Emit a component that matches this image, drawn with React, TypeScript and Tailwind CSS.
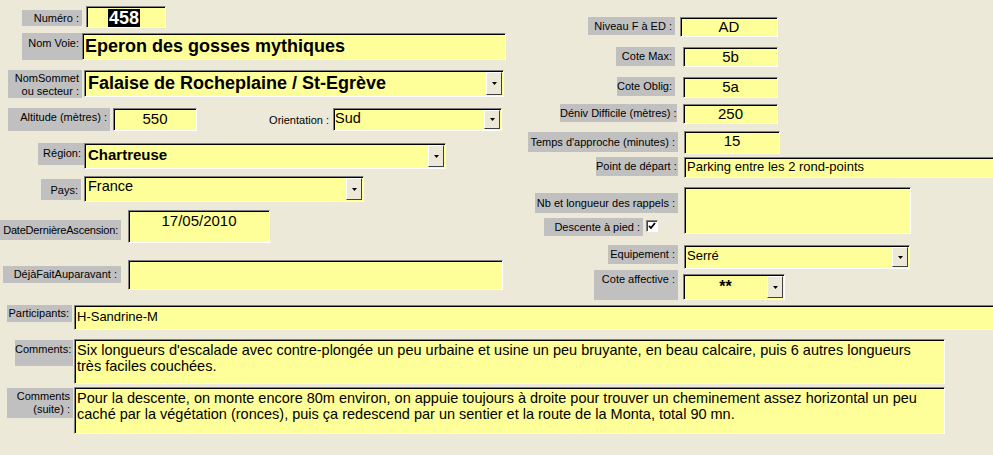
import type { ReactNode } from "react";

// Formulaire "fiche de voie" façon Access / Windows XP

function Label({
  children,
  className = "",
}: {
  children: ReactNode;
  className?: string;
}) {
  return (
    <div
      className={`flex-none overflow-hidden whitespace-nowrap bg-[#c0c0c0] pr-[3px] pt-[2px] text-right text-[11px] leading-[13px] text-black ${className}`}
    >
      {children}
    </div>
  );
}

function DropButton() {
  return (
    <div className="my-[1px] mr-[1px] flex w-[16px] flex-none items-center justify-center border border-b-[#404040] border-l-white border-r-[#404040] border-t-white bg-[#ece9d8]">
      <svg width="5" height="3" viewBox="0 0 5 3">
        <path d="M0 0h5L2.5 3z" fill="#000" />
      </svg>
    </div>
  );
}

function Field({
  children,
  className = "",
  dropdown = false,
}: {
  children?: ReactNode;
  className?: string;
  dropdown?: boolean;
}) {
  return (
    <div
      className={`flex flex-none border border-b-white border-l-[#808080] border-r-white border-t-[#808080] bg-[#ffff99] shadow-[inset_1px_1px_0_#000] ${className}`}
    >
      <div className="min-w-0 flex-1 overflow-hidden whitespace-nowrap">
        {children}
      </div>
      {dropdown && <DropButton />}
    </div>
  );
}

function RightRow({
  label,
  labelClass,
  children,
  className = "",
  width = "w-[155px]",
}: {
  label: ReactNode;
  labelClass: string;
  children: ReactNode;
  className?: string;
  width?: string;
}) {
  return (
    <div className={`flex items-start ${className}`}>
      <div className={`flex flex-none justify-end ${width}`}>
        <Label className={labelClass}>{label}</Label>
      </div>
      {children}
    </div>
  );
}

export default function App() {
  return (
    <div className="h-[455px] w-[993px] overflow-hidden bg-[#ece9d8] font-['Liberation_Sans',Arial,sans-serif] text-black">
      {/* Partie haute : deux colonnes */}
      <div className="flex h-[305px]">
        {/* Colonne gauche */}
        <div className="flex w-[520px] flex-none flex-col">
          {/* Numéro */}
          <div className="mt-[6px] flex items-start">
            <Label className="ml-[22px] mt-[4px] h-[16px] w-[60px] pt-[1px]">
              Numéro :
            </Label>
            <Field className="ml-[4px] h-[22px] w-[80px]">
              <span className="ml-[21px] mt-[1px] inline-block bg-black px-[1px] text-[18px] font-bold leading-[19px] text-white">
                458
              </span>
            </Field>
          </div>

          {/* Nom voie */}
          <div className="mt-[5px] flex items-start">
            <Label className="ml-[22px] h-[27px] w-[60px] pt-[4px]">
              Nom Voie:
            </Label>
            <Field className="h-[27px] w-[424px]">
              <div className="pl-[2px] pt-[2px] text-[18px] font-bold leading-[21px]">
                Eperon des gosses mythiques
              </div>
            </Field>
          </div>

          {/* Nom sommet */}
          <div className="mt-[10px] flex items-start">
            <Label className="ml-[8px] h-[28px] w-[74px] pt-[1px] leading-[12px]">
              NomSommet
              <br />
              ou secteur :
            </Label>
            <Field className="ml-[2px] h-[27px] w-[420px]" dropdown>
              <div className="pl-[3px] pt-[2px] text-[18px] font-bold leading-[21px]">
                Falaise de Rocheplaine / St-Egrève
              </div>
            </Field>
          </div>

          {/* Altitude + orientation */}
          <div className="mt-[10px] flex items-start">
            <Label className="ml-[8px] h-[23px] w-[102px] pt-[3px]">
              Altitude (mètres) :
            </Label>
            <Field className="ml-[3px] h-[23px] w-[84px]">
              <div className="pt-[1px] text-center text-[15px] leading-[18px]">
                550
              </div>
            </Field>
            <div className="mt-[6px] w-[136px] flex-none pr-[4px] text-right text-[11px] leading-[13px]">
              Orientation :
            </div>
            <Field className="h-[23px] w-[169px]" dropdown>
              <div className="pl-[1px] pt-[1px] text-[14.5px] leading-[17px]">
                Sud
              </div>
            </Field>
          </div>

          {/* Région */}
          <div className="mt-[12px] flex items-start">
            <Label className="ml-[38px] h-[22px] w-[46px] pt-[4px]">
              Région:
            </Label>
            <Field className="h-[26px] w-[362px]" dropdown>
              <div className="pl-[3px] pt-[2px] text-[15px] font-bold leading-[18px]">
                Chartreuse
              </div>
            </Field>
          </div>

          {/* Pays */}
          <div className="mt-[7px] flex items-start">
            <Label className="ml-[41px] mt-[3px] h-[21px] w-[40px] pt-[5px]">
              Pays:
            </Label>
            <Field className="ml-[3px] h-[26px] w-[280px]" dropdown>
              <div className="pl-[3px] pt-[1px] text-[14.5px] leading-[17px]">
                France
              </div>
            </Field>
          </div>

          {/* Date dernière ascension */}
          <div className="mt-[8px] flex items-start">
            <Label className="mt-[10px] h-[20px] w-[121px] pr-[1px] pt-[4px] tracking-[-0.2px]">
              DateDernièreAscension:
            </Label>
            <Field className="ml-[7px] h-[33px] w-[142px]">
              <div className="pt-[1px] text-center text-[15px] leading-[18px]">
                17/05/2010
              </div>
            </Field>
          </div>

          {/* Déjà fait */}
          <div className="mt-[17px] flex items-start">
            <Label className="ml-[3px] mt-[6px] h-[17px] w-[118px] pr-[4px] pt-[2px]">
              DéjàFaitAuparavant :
            </Label>
            <Field className="ml-[7px] h-[30px] w-[375px]" />
          </div>
        </div>

        {/* Colonne droite */}
        <div className="flex min-w-0 flex-1 flex-col">
          <RightRow
            className="mt-[17px]"
            label="Niveau F à ED :"
            labelClass="h-[18px] w-[87px] pt-[3px]"
          >
            <Field className="ml-[5px] h-[20px] w-[98px]">
              <div className="text-center text-[15px] leading-[18px]">AD</div>
            </Field>
          </RightRow>

          <RightRow
            className="mt-[10px]"
            label="Cote Max:"
            labelClass="h-[19px] w-[59px] pt-[3px]"
          >
            <Field className="ml-[8px] h-[20px] w-[95px]">
              <div className="text-center text-[15px] leading-[18px]">5b</div>
            </Field>
          </RightRow>

          <RightRow
            className="mt-[10px]"
            label="Cote Oblig:"
            labelClass="h-[19px] w-[58px] pt-[3px]"
          >
            <Field className="ml-[8px] h-[21px] w-[95px]">
              <div className="text-center text-[15px] leading-[18px]">5a</div>
            </Field>
          </RightRow>

          <RightRow
            className="mt-[6px]"
            width="w-[157px]"
            label="Déniv Difficile (mètres) :"
            labelClass="h-[18px] w-[117px] pt-[3px]"
          >
            <Field className="ml-[6px] h-[20px] w-[95px]">
              <div className="text-center text-[15px] leading-[18px]">250</div>
            </Field>
          </RightRow>

          <RightRow
            className="mt-[7px]"
            width="w-[158px]"
            label="Temps d'approche (minutes) :"
            labelClass="mt-[1px] h-[20px] w-[150px] pt-[4px]"
          >
            <Field className="ml-[6px] h-[23px] w-[96px]">
              <div className="text-center text-[15px] leading-[18px]">15</div>
            </Field>
          </RightRow>

          <RightRow
            className="mt-[3px]"
            width="w-[158px]"
            label="Point de départ :"
            labelClass="h-[19px] w-[82px] pt-[3px]"
          >
            <Field className="ml-[6px] h-[21px] w-[320px]">
              <div className="pl-[2px] pt-[1px] text-[13px] leading-[16px]">
                Parking entre les 2 rond-points
              </div>
            </Field>
          </RightRow>

          {/* Rappels + descente à pied */}
          <div className="mt-[9px] flex items-start">
            <div className="flex w-[158px] flex-none flex-col items-end">
              <Label className="mt-[6px] h-[20px] w-[143px] pt-[4px]">
                Nb et longueur des rappels :
              </Label>
              <div className="mt-[5px] flex items-start self-start">
                <Label className="ml-[24px] h-[18px] w-[99px] pt-[3px]">
                  Descente à pied :
                </Label>
                <div className="ml-[3px] mt-[2px] flex h-[12px] w-[12px] items-center justify-center border border-b-white border-l-[#808080] border-r-white border-t-[#808080] bg-white shadow-[inset_1px_1px_0_#404040]">
                  <svg width="8" height="8" viewBox="0 0 8 8">
                    <path
                      d="M1 4l2 2 4-5"
                      fill="none"
                      stroke="#000"
                      strokeWidth="1.8"
                    />
                  </svg>
                </div>
              </div>
            </div>
            <Field className="ml-[6px] h-[47px] w-[227px]" />
          </div>

          <RightRow
            className="mt-[9px]"
            width="w-[158px]"
            label="Equipement :"
            labelClass="h-[19px] w-[70px] pt-[3px]"
          >
            <Field className="ml-[6px] h-[24px] w-[226px]" dropdown>
              <div className="pl-[2px] pt-[2px] text-[13px] leading-[16px]">
                Serré
              </div>
            </Field>
          </RightRow>

          <RightRow
            className="mt-[1px]"
            width="w-[158px]"
            label="Cote affective :"
            labelClass="h-[30px] w-[84px] pt-[3px]"
          >
            <Field className="ml-[5px] mt-[4px] h-[26px] w-[102px]" dropdown>
              <div className="pt-[3px] text-center text-[16px] font-bold leading-[18px]">
                **
              </div>
            </Field>
          </RightRow>
        </div>
      </div>

      {/* Participants */}
      <div className="flex items-start">
        <Label className="ml-[7px] h-[17px] w-[65px] pr-[2px]">
          Participants:
        </Label>
        <Field className="ml-[2px] h-[25px] w-[930px]">
          <div className="pl-[2px] pt-[3px] text-[13px] leading-[16px]">
            H-Sandrine-M
          </div>
        </Field>
      </div>

      {/* Commentaires */}
      <div className="mt-[9px] flex items-start">
        <Label className="ml-[15px] mt-[1px] h-[26px] w-[58px] pr-[2px] pt-[3px] text-[10px]">
          Comments:
        </Label>
        <Field className="ml-[1px] h-[45px] w-[871px]">
          <div className="whitespace-nowrap pl-[2px] pt-[2px] text-[14.5px] leading-[16px]">
            Six longueurs d'escalade avec contre-plongée un peu urbaine et
            usine un peu bruyante, en beau calcaire, puis 6 autres longueurs
            <br />
            très faciles couchées.
          </div>
        </Field>
      </div>

      <div className="mt-[3px] flex items-start">
        <Label className="ml-[7px] mt-[1px] h-[30px] w-[66px] pr-[2px] pt-[1px] text-[10px] leading-[13px]">
          Comments
          <br />
          (suite) :
        </Label>
        <Field className="ml-[1px] h-[47px] w-[871px]">
          <div className="whitespace-nowrap pl-[2px] pt-[2px] text-[14.5px] leading-[16px]">
            Pour la descente, on monte encore 80m environ, on appuie toujours
            à droite pour trouver un cheminement assez horizontal un peu
            <br />
            caché par la végétation (ronces), puis ça redescend par un sentier
            et la route de la Monta, total 90 mn.
          </div>
        </Field>
      </div>
    </div>
  );
}
